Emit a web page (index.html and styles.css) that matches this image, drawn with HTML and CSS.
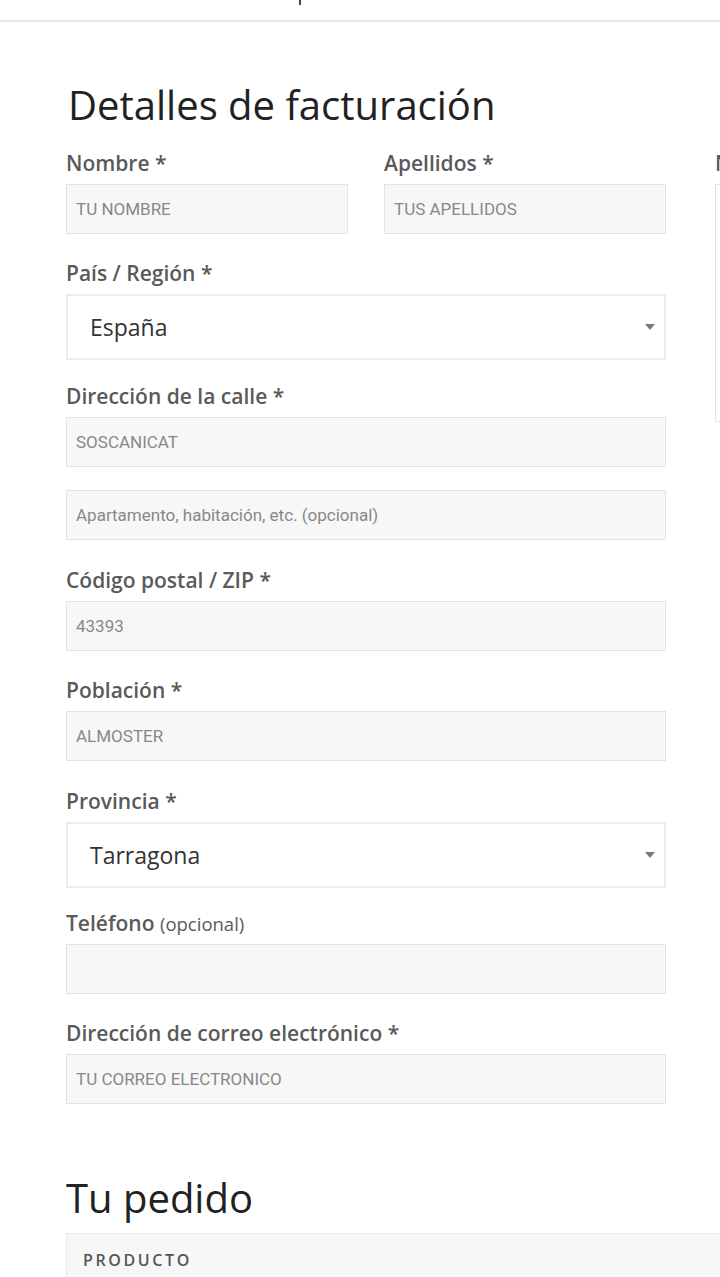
FILE: index.html
```html
<!DOCTYPE html>
<html lang="es">
<head>
<meta charset="utf-8">
<title>Finalizar compra</title>
<link rel="stylesheet" href="styles.css">
</head>
<body>
<header class="topbar"><span class="topbar-mark"></span></header>
<main class="page">
  <div class="checkout">
    <section class="billing">
      <h3 class="title title--billing">Detalles de facturación</h3>
      <div class="row-2">
        <div class="field">
          <label class="label">Nombre <abbr class="req">*</abbr></label>
          <div class="input"><span class="ph">TU NOMBRE</span></div>
        </div>
        <div class="field">
          <label class="label">Apellidos <abbr class="req">*</abbr></label>
          <div class="input"><span class="ph">TUS APELLIDOS</span></div>
        </div>
      </div>
      <div class="field field--select">
        <label class="label">País / Región <abbr class="req">*</abbr></label>
        <div class="select"><span class="select-text">España</span><span class="select-arrow"></span></div>
      </div>
      <div class="field">
        <label class="label">Dirección de la calle <abbr class="req">*</abbr></label>
        <div class="input"><span class="ph">SOSCANICAT</span></div>
      </div>
      <div class="field">
        <div class="input"><span class="ph">Apartamento, habitación, etc. (opcional)</span></div>
      </div>
      <div class="field">
        <label class="label">Código postal / ZIP <abbr class="req">*</abbr></label>
        <div class="input"><span class="ph">43393</span></div>
      </div>
      <div class="field">
        <label class="label">Población <abbr class="req">*</abbr></label>
        <div class="input"><span class="ph">ALMOSTER</span></div>
      </div>
      <div class="field field--select field--select-late">
        <label class="label">Provincia <abbr class="req">*</abbr></label>
        <div class="select"><span class="select-text">Tarragona</span><span class="select-arrow"></span></div>
      </div>
      <div class="field">
        <label class="label">Teléfono <span class="optional">(opcional)</span></label>
        <div class="input"></div>
      </div>
      <div class="field">
        <label class="label">Dirección de correo electrónico <abbr class="req">*</abbr></label>
        <div class="input"><span class="ph">TU CORREO ELECTRONICO</span></div>
      </div>
    </section>
    <aside class="additional">
      <label class="label">Notas del pedido <span class="optional">(opcional)</span></label>
      <div class="textarea"></div>
    </aside>
  </div>
  <section class="order">
    <h3 class="title">Tu pedido</h3>
    <div class="order-table">
      <div class="order-head"><span class="th">Producto</span></div>
    </div>
  </section>
</main>
</body>
</html>
```

FILE: styles.css
```css
html, body {
  margin: 0;
  padding: 0;
  background: #fff;
  overflow: hidden;
}
body {
  font-family: "Open Sans", "Liberation Sans", sans-serif;
  color: #555;
  width: 720px;
  height: 1277px;
}
.topbar {
  height: 20px;
  border-bottom: 2px solid #e6e6e6;
  position: relative;
}
.topbar-mark {
  position: absolute;
  left: 299px;
  top: 0;
  width: 2px;
  height: 5px;
  background: #444;
}
.page {
  padding: 58.5px 0 0 66px;
  width: 1400px;
}
.checkout {
  display: flex;
  gap: 49px;
  align-items: flex-start;
}
.billing {
  width: 600px;
  flex: none;
}
.title {
  margin: 0 0 18px;
  font-weight: 400;
  font-size: 40px;
  line-height: 48px;
  color: #222;
}
.title--billing {
  padding-left: 2px;
}
.row-2 {
  display: flex;
  gap: 36px;
}
.row-2 .field {
  flex: 1;
}
.field {
  margin-bottom: 23.5px;
}
.field--select {
  margin-bottom: 19.5px;
}
.field--select-late {
  margin-bottom: 19px;
}
.label {
  display: block;
  font-size: 21px;
  font-weight: 600;
  line-height: 33px;
  margin-bottom: 4px;
  color: #5a5a5a;
  white-space: nowrap;
}
.req {
  text-decoration: none;
  border: 0;
  font-weight: 600;
  color: #5a5a5a;
}
.optional {
  font-size: 18.5px;
  font-weight: 400;
}
.input {
  box-sizing: border-box;
  height: 50px;
  background: #f7f7f7;
  border: 1px solid #e4e4e4;
  padding: 0 9px;
  display: flex;
  align-items: center;
}
.ph {
  font-family: Roboto, "Liberation Sans", sans-serif;
  font-size: 17px;
  color: #888;
}
.select {
  box-sizing: border-box;
  height: 66px;
  background: #fff;
  border: 2px solid #ececec;
  padding: 0 22px;
  display: flex;
  align-items: center;
  justify-content: space-between;
}
.select-text {
  font-size: 23px;
  color: #333;
}
.select-arrow {
  width: 0;
  height: 0;
  border-left: 5px solid transparent;
  border-right: 5px solid transparent;
  border-top: 6px solid #7a7a7a;
  margin-right: -13px;
}
.additional {
  width: 400px;
  flex: none;
  padding-top: 66px;
}
.textarea {
  box-sizing: border-box;
  height: 238px;
  border: 1px solid #e4e4e4;
  background: #fff;
}
.order {
  padding-top: 46.5px;
}
.order .title {
  margin-bottom: 11px;
}
.order-table {
  border: 1px solid #e8e8e8;
  border-right: 0;
  width: 1000px;
}
.order-head {
  background: #f7f7f7;
  padding: 14px 16px;
  height: 60px;
}
.th {
  font-size: 16px;
  font-weight: 600;
  text-transform: uppercase;
  letter-spacing: 2.6px;
  line-height: 24px;
  color: #555;
}
```
